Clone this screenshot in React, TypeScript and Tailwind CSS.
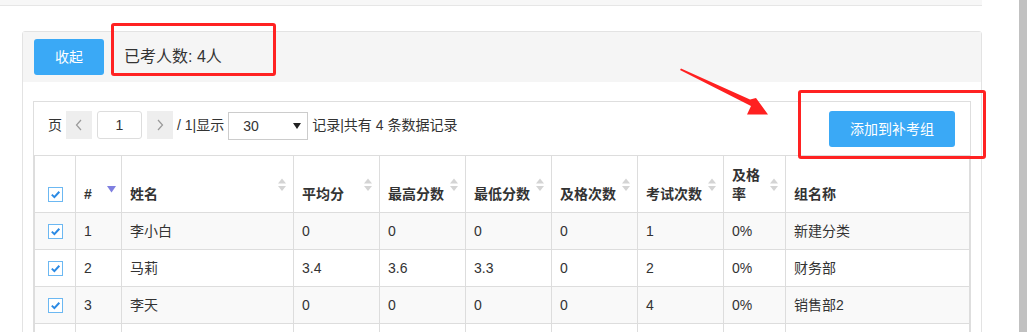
import React from "react";

const font = { fontFamily: '"Liberation Sans", "Noto Sans CJK SC", sans-serif' };

const columns = [
  { label: "#", w: "w-[46px]", sort: "desc" },
  { label: "姓名", w: "w-[172px]", sort: "both" },
  { label: "平均分", w: "w-[86px]", sort: "both" },
  { label: "最高分数", w: "w-[86px]", sort: "both" },
  { label: "最低分数", w: "w-[86px]", sort: "both" },
  { label: "及格次数", w: "w-[86px]", sort: "both" },
  { label: "考试次数", w: "w-[86px]", sort: "both" },
  { label: "及格率", w: "w-[62px]", sort: "both" },
  { label: "组名称", w: "", sort: "none" },
];

const rows = [
  ["1", "李小白", "0", "0", "0", "0", "1", "0%", "新建分类"],
  ["2", "马莉", "3.4", "3.6", "3.3", "0", "2", "0%", "财务部"],
  ["3", "李天", "0", "0", "0", "0", "4", "0%", "销售部2"],
];

function Check() {
  return (
    <span className="inline-flex w-[15px] h-[15px] border border-[#6cb8f2] bg-white items-center justify-center align-middle">
      <svg width="11" height="11" viewBox="0 0 11 11">
        <path d="M1.8 5.6 L4.4 8.1 L9.3 2.8" fill="none" stroke="#2b8ae4" strokeWidth="2" />
      </svg>
    </span>
  );
}

function SortIcon({ kind }: { kind: string }) {
  if (kind === "none") return null;
  if (kind === "desc")
    return (
      <svg className="absolute right-[5px] top-[30px]" width="9" height="7" viewBox="0 0 9 7">
        <polygon points="0,0 9,0 4.5,6.5" fill="#7f7fe0" />
      </svg>
    );
  return (
    <svg className="absolute right-[7px] top-[22px]" width="8" height="14" viewBox="0 0 8 14">
      <polygon points="0,5.5 4,0.5 8,5.5" fill="#d4d4d4" />
      <polygon points="0,8 4,13 8,8" fill="#d4d4d4" />
    </svg>
  );
}

export default function App() {
  return (
    <div className="w-[1027px] h-[332px] overflow-hidden relative flex bg-white text-[#333]" style={font}>
      <div className="flex-1">
        <div className="w-[982px] h-[6px] bg-[#f7f7f7] border-b border-[#e6e6e6]" />

        <div className="ml-[22px] mt-[25px] w-[960px] border border-[#e3e3e3] rounded-t-[3px]">
          <div className="h-[50px] bg-[#f5f5f5] flex items-center px-[11px]">
            <button className="w-[70px] h-[36px] rounded-[3px] bg-[#3aa9f6] text-white text-[14px]">收起</button>
            <span className="ml-[20px] text-[16px] text-[#333]">已考人数: 4人</span>
          </div>

          <div className="pt-[19px] px-[10px]">
            <div className="border border-[#dedede] border-b-0">
              <div className="h-[53px] flex items-start pt-[9px] pl-[14px] pr-[15px] text-[14px]">
                <span className="leading-[28px]">页</span>
                <button className="ml-[4px] w-[26px] h-[28px] bg-[#eeeeee] flex items-center justify-center">
                  <svg width="8" height="12" viewBox="0 0 8 12">
                    <path d="M6 1 L1.5 6 L6 11" fill="none" stroke="#999" strokeWidth="1.2" />
                  </svg>
                </button>
                <div className="ml-[5px] w-[45px] h-[28px] border border-[#dddddd] rounded-[3px] flex items-center justify-center">1</div>
                <button className="ml-[5px] w-[26px] h-[28px] bg-[#eeeeee] flex items-center justify-center">
                  <svg width="8" height="12" viewBox="0 0 8 12">
                    <path d="M2 1 L6.5 6 L2 11" fill="none" stroke="#999" strokeWidth="1.2" />
                  </svg>
                </button>
                <span className="ml-[4px] leading-[28px]">/ 1|显示</span>
                <div className="ml-[4px] mt-[1px] w-[80px] h-[28px] border border-[#cccccc] flex items-center pl-[14px] pr-[6px]">
                  <span className="flex-1">30</span>
                  <svg width="8" height="6" viewBox="0 0 8 6">
                    <polygon points="0,0 8,0 4,6" fill="#222" />
                  </svg>
                </div>
                <span className="ml-[4px] leading-[28px]">记录|共有 4 条数据记录</span>
                <button className="ml-auto w-[126px] h-[36px] rounded-[3px] bg-[#3aa9f6] text-white text-[14px]">添加到补考组</button>
              </div>

              <table className="w-[936px] border-collapse text-[14px] table-fixed">
                <thead>
                  <tr className="h-[57px]">
                    <th className="w-[41px] border border-[#dddddd] align-bottom pb-[8px]">
                      <Check />
                    </th>
                    {columns.map((c) => (
                      <th
                        key={c.label}
                        className={`${c.w} relative border border-[#dddddd] align-bottom text-left font-bold pl-[8px] pr-[18px] pb-[8px] leading-[19px]`}
                      >
                        {c.label}
                        <SortIcon kind={c.sort} />
                      </th>
                    ))}
                  </tr>
                </thead>
                <tbody>
                  {rows.map((r, i) => (
                    <tr key={i} className={`h-[37px] ${i % 2 === 0 ? "bg-[#f9f9f9]" : "bg-white"}`}>
                      <td className="border border-[#dddddd] text-center">
                        <Check />
                      </td>
                      {r.map((v, j) => (
                        <td key={j} className="border border-[#dddddd] pl-[8px]">
                          {v}
                        </td>
                      ))}
                    </tr>
                  ))}
                  <tr className="h-[37px] bg-white">
                    <td className="border border-[#dddddd]" />
                    {columns.map((c) => (
                      <td key={c.label} className="border border-[#dddddd]" />
                    ))}
                  </tr>
                </tbody>
              </table>
            </div>
          </div>
        </div>
      </div>

      <div className="w-[8px] h-full bg-[#c1c1c1]" />

      {/* annotations */}
      <div className="absolute left-[111px] top-[23px] w-[165px] h-[53px] border-[3px] border-[#ff2222] rounded-[3px]" />
      <div className="absolute left-[798px] top-[90px] w-[188px] h-[69px] border-[3px] border-[#ff2222] rounded-[3px]" />
      <svg className="absolute left-[676px] top-[64px]" width="100" height="56" viewBox="0 0 100 56">
        <polygon points="5,4.5 74,35.5 80,34 92,50.5 71,50.5 75,42 4,6" fill="#ff2020" />
      </svg>
    </div>
  );
}
